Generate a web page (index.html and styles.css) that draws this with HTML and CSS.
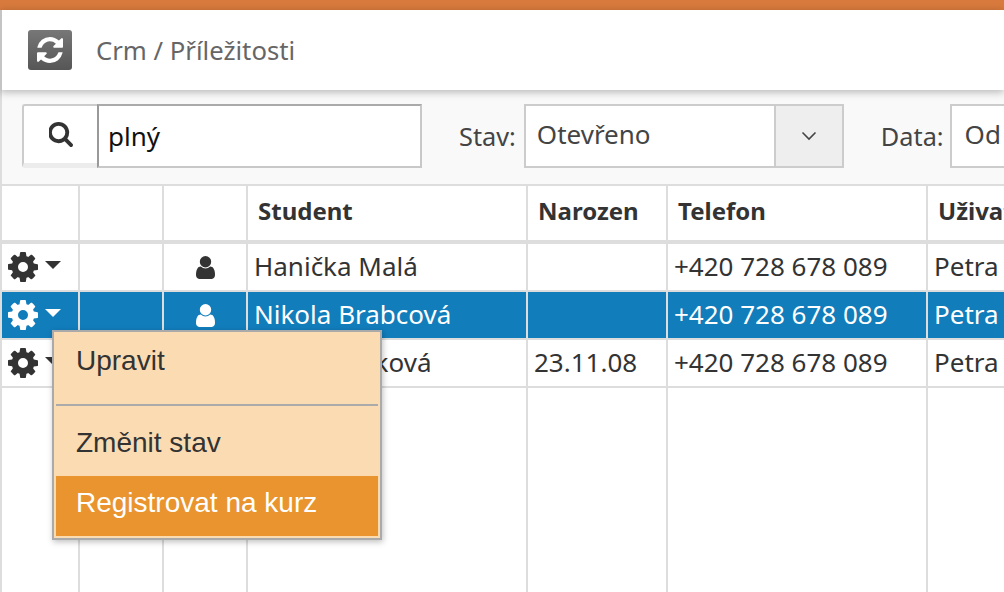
FILE: index.html
```html
<!DOCTYPE html>
<html lang="cs">
<head>
<meta charset="utf-8">
<title>Crm / Příležitosti</title>
<link rel="stylesheet" href="styles.css">
</head>
<body>
<svg class="sprite" aria-hidden="true">
  <symbol id="i-cog" viewBox="128 128 1536 1536"><path d="M1152 896q0-106-75-181t-181-75-181 75-75 181 75 181 181 75 181-75 75-181zm512-109v222q0 12-8 23t-20 13l-185 28q-19 54-39 91 35 50 107 138 10 12 10 25t-9 23q-27 37-99 108t-94 71q-12 0-26-9l-138-108q-44 23-91 38-16 136-29 186-7 28-36 28h-222q-14 0-24.500-8.500t-11.500-21.500l-28-184q-49-16-90-37l-141 107q-10 9-25 9-14 0-25-11-126-114-165-168-7-10-7-23 0-12 8-23 15-21 51-66.500t54-70.500q-27-50-41-99l-183-27q-13-2-21-12.500t-8-23.500v-222q0-12 8-23t19-13l186-28q14-46 39-92-40-57-107-138-10-12-10-24 0-10 9-23 26-36 98.500-107.500t94.500-71.500q13 0 26 10l138 107q44-23 91-38 16-136 29-186 7-28 36-28h222q14 0 24.500 8.500t11.500 21.500l28 184q49 16 90 37l142-107q9-9 24-9 13 0 25 10 129 119 165 170 7 8 7 22 0 12-8 23-15 21-51 66.500t-54 70.500q26 50 41 98l183 28q13 2 21 12.500t8 23.500z"/></symbol>
  <symbol id="i-user" viewBox="256 128 1280 1536"><path d="M1536 1399q0 109-62.500 187t-150.500 78h-854q-88 0-150.500-78t-62.500-187q0-85 8.500-160.500t31.500-152 58.500-131 94-89 134.500-34.500q131 128 313 128t313-128q76 0 134.500 34.500t94 89 58.500 131 31.500 152 8.500 160.500zm-256-887q0 159-112.500 271.500t-271.500 112.500-271.500-112.500-112.500-271.500 112.500-271.500 271.500-112.500 271.500 112.500 112.500 271.500z"/></symbol>
</svg>
<div class="page">
  <div class="topbar"></div>
  <header class="header">
    <span class="reload">
      <svg class="reload-icon" viewBox="128 128 1536 1536"><path d="M1639 1056q0 5-1 7-64 268-268 434.500t-478 166.500q-146 0-282.500-55t-243.500-157l-129 129q-19 19-45 19t-45-19-19-45v-448q0-26 19-45t45-19h448q26 0 45 19t19 45-19 45l-137 137q71 66 161 102t187 36q134 0 250-65t186-179q11-17 53-117 8-23 30-23h192q13 0 22.500 9.500t9.500 22.500zm25-800v448q0 26-19 45t-45 19h-448q-26 0-45-19t-19-45 19-45l138-138q-148-137-349-137-134 0-250 65t-186 179q-11 17-53 117-8 23-30 23h-199q-13 0-22.500-9.500t-9.500-22.500v-7q65-268 270-434.500t480-166.500q146 0 284 55.500t245 156.500l130-129q19-19 45-19t45 19 19 45z"/></svg>
    </span>
    <span class="crumb">Crm / Příležitosti</span>
  </header>
  <div class="toolbar">
    <div class="search">
      <span class="search-btn">
        <svg class="search-icon" viewBox="128 128 1600 1664"><path d="M1216 832q0-185-131.500-316.500t-316.500-131.500-316.500 131.500-131.500 316.500 131.500 316.500 316.500 131.500 316.500-131.500 131.500-316.500zm512 832q0 52-38 90t-90 38q-54 0-90-38l-343-342q-179 124-399 124-143 0-273.500-55.500t-225-150-150-225-55.500-273.500 55.500-273.500 150-225 225-150 273.500-55.500 273.500 55.500 225 150 150 225 55.500 273.500q0 220-124 399l343 343q37 37 37 90z"/></svg>
      </span>
      <span class="search-input">plný</span>
    </div>
    <span class="label label-stav">Stav:</span>
    <div class="select">
      <span class="select-value">Otevřeno</span>
      <span class="select-arrow">
        <svg class="chevron" viewBox="0 0 16 10"><path d="M1.500 1.500 8 8l6.500-6.500"/></svg>
      </span>
    </div>
    <span class="label label-data">Data:</span>
    <div class="date">Od</div>
  </div>
  <div class="grid-wrap">
    <table class="grid">
      <colgroup>
        <col class="c1"><col class="c2"><col class="c3"><col class="c4"><col class="c5"><col class="c6"><col class="c7">
      </colgroup>
      <thead>
        <tr><th></th><th></th><th></th><th>Student</th><th>Narozen</th><th>Telefon</th><th>Uživatel</th></tr>
      </thead>
      <tbody>
        <tr>
          <td class="actions"><span class="act"><svg class="cog"><use href="#i-cog"/></svg><i class="caret"></i></span></td>
          <td></td>
          <td class="center"><svg class="user"><use href="#i-user"/></svg></td>
          <td>Hanička Malá</td><td></td><td>+420 728 678 089</td><td>Petra Nová</td>
        </tr>
        <tr class="selected">
          <td class="actions"><span class="act"><svg class="cog"><use href="#i-cog"/></svg><i class="caret"></i></span></td>
          <td></td>
          <td class="center"><svg class="user"><use href="#i-user"/></svg></td>
          <td>Nikola Brabcová</td><td></td><td>+420 728 678 089</td><td>Petra Nová</td>
        </tr>
        <tr>
          <td class="actions"><span class="act"><svg class="cog"><use href="#i-cog"/></svg><i class="caret"></i></span></td>
          <td></td>
          <td></td>
          <td>Ema Havlíková</td><td>23.11.08</td><td>+420 728 678 089</td><td>Petra Nová</td>
        </tr>
        <tr class="filler"><td></td><td></td><td></td><td></td><td></td><td></td><td></td></tr>
      </tbody>
    </table>
    <div class="menu">
      <div class="menu-item">Upravit</div>
      <div class="menu-sep"></div>
      <div class="menu-item">Změnit stav</div>
      <div class="menu-item active">Registrovat na kurz</div>
    </div>
  </div>
</div>
</body>
</html>
```
FILE: styles.css
```css
* { box-sizing: border-box; }
html, body { margin: 0; padding: 0; background: #fff; }
body { font-family: "Noto Sans", "Open Sans", sans-serif; color: #333; }
.sprite { display: none; }
.page { width: 1004px; height: 592px; overflow: hidden; display: flex; flex-direction: column; }
.topbar { height: 10px; background: #d87a3d; flex: none; }
.header {
  height: 80px; flex: none; background: #fff; border-left: 2px solid #c4c4c4;
  display: flex; align-items: center; padding-left: 26px;
  box-shadow: 0 2px 8px rgba(0,0,0,.28); z-index: 2;
}
.reload {
  width: 44px; height: 40px; border-radius: 3px; background: linear-gradient(#777, #565656);
  display: flex; align-items: center; justify-content: center;
}
.reload-icon { width: 26px; height: 26px; fill: #fff; }
.crumb { margin-left: 24px; font-size: 25.700px; color: #666; }
.toolbar {
  height: 94px; flex: none; background: #f9f9f9; border-left: 2px solid #ddd;
  display: flex; align-items: center; padding: 0 0 3px 20px; white-space: nowrap;
}
.search { display: flex; width: 400px; height: 64px; flex: none; }
.search-btn {
  width: 75px; flex: none; background: #fff; border: 2px solid #ccc; border-right: 0;
  border-bottom: 5px solid #ececec; border-radius: 3px 0 0 3px;
  display: flex; align-items: center; justify-content: center;
}
.search-icon { width: 24px; height: 25px; fill: #333; }
.search-input {
  flex: 1; background: #fff; border: 2px solid #c8c8c8; border-left-color: #999; border-top-color: #aaa;
  font-size: 26px; color: #111; padding: 0 0 0 9px; display: flex; align-items: center;
}
.label { font-size: 25.300px; color: #444; }
.label-stav { margin-left: 37px; }
.label-data { margin-left: 37px; }
.select {
  width: 320px; height: 64px; flex: none; margin-left: 8px; border: 2px solid #ccc; background: #fff;
  display: flex;
}
.select-value { flex: 1; font-size: 26px; color: #444; padding: 0 0 4px 11px; display: flex; align-items: center; }
.select-arrow {
  width: 68px; flex: none; background: #eee; border-left: 2px solid #ccc;
  display: flex; align-items: center; justify-content: center;
}
.chevron { width: 16px; height: 10px; fill: none; stroke: #444; stroke-width: 1.600; }
.date {
  width: 120px; height: 64px; flex: none; margin-left: 6px; border: 2px solid #ccc; background: #fff;
  font-size: 26px; color: #444; padding: 0 0 4px 13px; display: flex; align-items: center;
}
.grid-wrap { position: relative; flex: 1; min-height: 0; overflow: hidden; background: #fff; }
.grid { border-collapse: separate; border-spacing: 0; table-layout: fixed; width: 1128px; }
.c1 { width: 80px; } .c2 { width: 84px; } .c3 { width: 84px; } .c4 { width: 280px; }
.c5 { width: 140px; } .c6 { width: 260px; } .c7 { width: 200px; }
.grid th, .grid td { border-right: 2px solid #ddd; border-bottom: 2px solid #ddd; white-space: nowrap; overflow: hidden; }
.grid th:first-child, .grid td:first-child { border-left: 2px solid #ddd; }
.grid th {
  height: 60px; border-top: 2px solid #ddd; border-bottom-width: 4px; text-align: left;
  font-size: 24px; font-weight: 700; color: #333; padding: 0 0 6px 10px;
}
.grid td { height: 48px; font-size: 26px; line-height: 40px; color: #333; padding: 0 0 2px 6px; vertical-align: middle; }
.grid .selected td { background: #117dbb; color: #fff; }
.grid .filler td { height: 220px; border-bottom: 0; }
.grid td.actions { padding: 0 0 0 6px; }
.grid td.center { padding: 0; text-align: center; }
.act { display: flex; align-items: center; }
.cog { width: 30px; height: 30px; fill: currentColor; flex: none; }
.caret {
  width: 0; height: 0; margin: 0 0 5px 7px; border-left: 8px solid transparent; border-right: 8px solid transparent;
  border-top: 8px solid currentColor;
}
.user { width: 19px; height: 23px; fill: currentColor; display: block; margin: 0 auto; }
.menu {
  position: absolute; left: 52px; top: 146px; width: 330px; height: 210px;
  background: #fbdcb2; border: 2px solid #aaa; padding: 2px; box-shadow: 1px 2px 6px rgba(0,0,0,.25);
  font-family: "Liberation Sans", Arial, sans-serif; font-size: 28px; color: #333;
}
.menu-item { height: 60px; padding: 0 0 6px 20px; display: flex; align-items: center; }
.menu-sep { height: 2px; background: #aaa; margin: 10px 0; }
.menu-item.active { background: #e9942e; color: #fff; }
```
